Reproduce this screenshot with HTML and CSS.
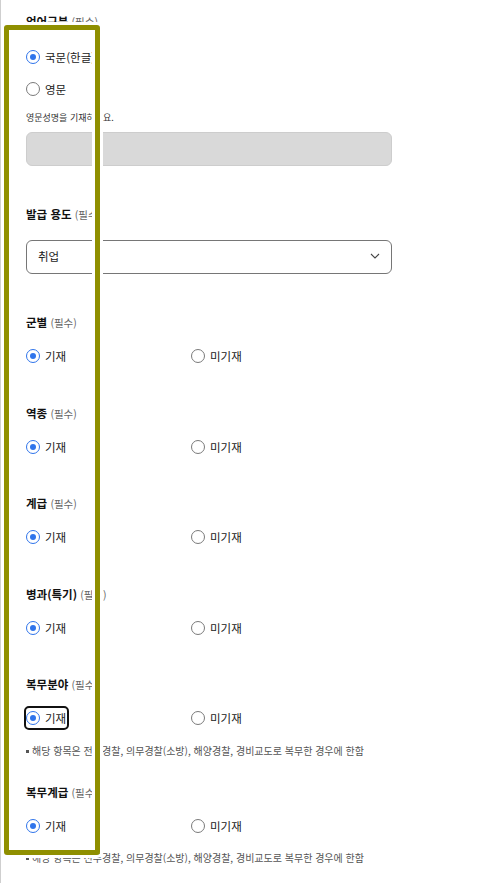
FILE: index.html
```html
<!DOCTYPE html>
<html lang="ko">
<head>
<meta charset="utf-8">
<link rel="stylesheet" href="styles.css">
</head>
<body>
<div class="page">
  <form class="form">
    <section class="field field-first">
      <h3 class="title">언어구분 <span class="req">(필수)</span></h3>
      <div class="stack">
        <label class="radio checked"><span class="dot"></span><span class="txt">국문(한글)</span></label>
        <label class="radio"><span class="dot"></span><span class="txt">영문</span></label>
      </div>
      <p class="hint">영문성명을 기재하세요.</p>
      <div class="input disabled"></div>
    </section>

    <section class="field field-select">
      <h3 class="title">발급 용도 <span class="req">(필수)</span></h3>
      <div class="select">
        <span class="sel-text">취업</span>
        <svg class="chev" width="10" height="6" viewBox="0 0 10 6"><path d="M1 1 L5 5 L9 1" fill="none" stroke="#444" stroke-width="1.1"/></svg>
      </div>
    </section>

    <section class="field field-after-select">
      <h3 class="title">군별 <span class="req">(필수)</span></h3>
      <div class="pair">
        <label class="radio checked"><span class="dot"></span><span class="txt">기재</span></label>
        <label class="radio"><span class="dot"></span><span class="txt">미기재</span></label>
      </div>
    </section>

    <section class="field">
      <h3 class="title">역종 <span class="req">(필수)</span></h3>
      <div class="pair">
        <label class="radio checked"><span class="dot"></span><span class="txt">기재</span></label>
        <label class="radio"><span class="dot"></span><span class="txt">미기재</span></label>
      </div>
    </section>

    <section class="field">
      <h3 class="title">계급 <span class="req">(필수)</span></h3>
      <div class="pair">
        <label class="radio checked"><span class="dot"></span><span class="txt">기재</span></label>
        <label class="radio"><span class="dot"></span><span class="txt">미기재</span></label>
      </div>
    </section>

    <section class="field">
      <h3 class="title">병과(특기) <span class="req">(필수)</span></h3>
      <div class="pair">
        <label class="radio checked"><span class="dot"></span><span class="txt">기재</span></label>
        <label class="radio"><span class="dot"></span><span class="txt">미기재</span></label>
      </div>
    </section>

    <section class="field">
      <h3 class="title">복무분야 <span class="req">(필수)</span></h3>
      <div class="pair">
        <label class="radio checked focused"><span class="dot"></span><span class="txt">기재</span></label>
        <label class="radio"><span class="dot"></span><span class="txt">미기재</span></label>
      </div>
      <p class="note">해당 항목은 전투경찰, 의무경찰(소방), 해양경찰, 경비교도로 복무한 경우에 한함</p>
    </section>

    <section class="field field-after-note">
      <h3 class="title">복무계급 <span class="req">(필수)</span></h3>
      <div class="pair">
        <label class="radio checked"><span class="dot"></span><span class="txt">기재</span></label>
        <label class="radio"><span class="dot"></span><span class="txt">미기재</span></label>
      </div>
      <p class="note note-last">해당 항목은 전투경찰, 의무경찰(소방), 해양경찰, 경비교도로 복무한 경우에 한함</p>
    </section>
  </form>

  <div class="highlight"></div>
</div>
</body>
</html>
```

FILE: styles.css
```css
html, body {
  margin: 0;
  padding: 0;
  background: #fff;
}
body {
  font-family: "Noto Sans CJK KR", "Noto Sans", sans-serif;
  color: #222;
  -webkit-font-smoothing: antialiased;
}
.page {
  position: relative;
  min-height: 883px;
  border-left: 1px solid #cfcfcf;
  overflow: hidden;
}
.form {
  width: 366px;
  padding: 0 0 40px 25px;
  margin: 0;
}
.field {
  margin-top: 36.5px;
}
.field-first {
  margin-top: 11px;
}
.field-select {
  margin-top: 38px;
}
.field-after-select {
  margin-top: 38px;
}
.field-after-note {
  margin-top: 23px;
}
.title {
  margin: 0;
  height: 20px;
  line-height: 20px;
  font-size: 11.5px;
  font-weight: 700;
  color: #111;
}
.req {
  font-size: 10.5px;
  font-weight: 400;
  color: #666;
}
.stack {
  margin-top: 16px;
  display: flex;
  flex-direction: column;
  gap: 12px;
}
.pair {
  margin-top: 14px;
  display: grid;
  grid-template-columns: 165px 1fr;
}
.radio {
  display: inline-flex;
  align-items: center;
  align-self: start;
  justify-self: start;
  height: 20px;
  gap: 5px;
  font-size: 11.5px;
  color: #222;
  border-radius: 3px;
}
.dot {
  box-sizing: border-box;
  width: 14px;
  height: 14px;
  border-radius: 50%;
  border: 1.3px solid #7a7a7a;
  background: #fff;
  display: inline-flex;
  align-items: center;
  justify-content: center;
}
.radio.checked .dot {
  border: 1.5px solid #2f74eb;
}
.radio.checked .dot::after {
  content: "";
  width: 6px;
  height: 6px;
  border-radius: 50%;
  background: #2f74eb;
}
.focused {
  outline: 2px solid #111;
  outline-offset: 0;
  padding-right: 1px;
}
.hint {
  margin: 11px 0 0;
  font-size: 9px;
  line-height: 16px;
  color: #333;
}
.input {
  box-sizing: border-box;
  margin-top: 6px;
  height: 34px;
  border-radius: 6px;
  border: 1px solid #cdcdcd;
}
.input.disabled {
  background: #d9d9d9;
}
.select {
  box-sizing: border-box;
  margin-top: 16px;
  height: 34px;
  border: 1px solid #767676;
  border-radius: 6px;
  display: flex;
  align-items: center;
  justify-content: space-between;
  padding: 0 11px 2px 11px;
}
.sel-text {
  font-size: 11.5px;
  color: #222;
}
.chev {
  display: block;
}
.note {
  margin: 15px 0 0;
  font-size: 10px;
  line-height: 16px;
  color: #555;
  white-space: nowrap;
}
.note::before {
  content: "";
  display: inline-block;
  width: 3px;
  height: 3px;
  background: #555;
  vertical-align: middle;
  margin: 0 3px 2px 0;
}
.note-last {
  margin-top: 14px;
}
.highlight {
  position: absolute;
  left: 3px;
  top: 25px;
  width: 86px;
  height: 820px;
  border: 5px solid #8f8f00;
  border-radius: 3px;
  box-shadow: 0 0 0 3px #fff, inset 0 0 0 3px #fff;
  pointer-events: none;
}
```
